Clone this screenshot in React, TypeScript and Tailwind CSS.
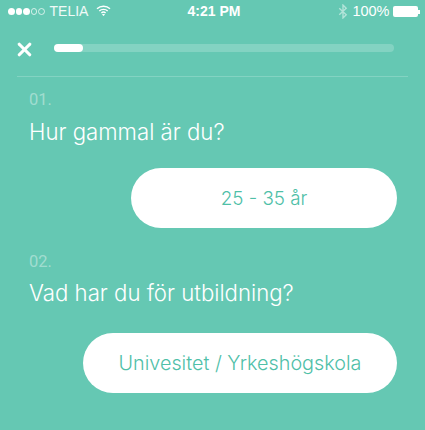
import { X } from "lucide-react";

const questions = [
  { num: "01.", text: "Hur gammal är du?", answer: "25 - 35 år", width: "w-[266px]", size: "text-[18.8px]", titleGap: "mt-[8px]", answerGap: "mt-[22px]" },
  { num: "02.", text: "Vad har du för utbildning?", answer: "Univesitet / Yrkeshögskola", width: "w-[314px]", size: "text-[19.8px]", titleGap: "mt-[7px]", answerGap: "mt-[26px]" },
];

const StatusBar = () => (
  <div className="flex h-[22px] items-center justify-between pl-2 pr-[5px] pt-[1px] font-['Liberation_Sans',sans-serif] text-[14px] text-white">
    <div className="flex w-[150px] items-center">
      <div className="flex gap-[1px]">
        {[0, 1, 2].map((i) => (
          <span key={i} className="h-[6.5px] w-[6.5px] rounded-full bg-white" />
        ))}
        {[3, 4].map((i) => (
          <span key={i} className="h-[6.5px] w-[6.5px] rounded-full border border-white/70" />
        ))}
      </div>
      <span className="ml-[5px] text-white/90">TELIA</span>
      <svg className="ml-[8px] -mt-[2px]" width="15" height="11" viewBox="0 0 15 11" fill="none" stroke="white" strokeWidth="1.4">
        <path d="M1 3.8C4.6 .4 10.4 .4 14 3.8" />
        <path d="M3.3 6C5.6 3.8 9.4 3.8 11.7 6" />
        <path d="M5.4 8C6.5 7 8.5 7 9.6 8" />
        <path d="M7.5 11L6 9.4C6.8 8.8 8.2 8.8 9 9.4Z" fill="white" stroke="none" />
      </svg>
    </div>
    <span className="font-bold">4:21 PM</span>
    <div className="flex w-[150px] items-center justify-end">
      <svg width="10" height="15" viewBox="0 0 9 14" fill="none" stroke="white" strokeOpacity="0.5" strokeWidth="1.3">
        <path d="M1 4L7.5 10L4.5 13V1L7.5 4L1 10" />
      </svg>
      <span className="ml-[4px] text-[14.5px]">100%</span>
      <div className="ml-[4px] flex items-center">
        <div className="h-[11px] w-[25px] rounded-[2px] border border-white/80 bg-white" />
        <div className="h-[4px] w-[1.5px] bg-white" />
      </div>
    </div>
  </div>
);

export default function App() {
  return (
    <div className="h-[430px] w-[425px] overflow-hidden bg-[#65c8b3] font-['Inter',sans-serif] text-white">
      <StatusBar />
      <div className="mx-[17px] flex h-[55px] items-start border-b border-white/20 pt-[18px]">
        <X className="-ml-[3px] -mt-[1px] h-[21px] w-[21px]" strokeWidth={3.6} />
        <div className="ml-[19px] mt-[4px] h-[8px] w-[340px] rounded-full bg-white/20">
          <div className="h-full w-[29px] rounded-full bg-white" />
        </div>
      </div>
      <div className="pl-[29px] pr-[28px] pt-[13px]">
        {questions.map((q) => (
          <div key={q.num} className="mb-[24px]">
            <p className="font-['Roboto',sans-serif] text-[16.5px] leading-[20px] text-white/40">{q.num}</p>
            <h2 className={`text-[22.2px] font-light leading-[28px] ${q.titleGap}`}>{q.text}</h2>
            <div className={`flex justify-end ${q.answerGap}`}>
              <button className={`h-[60px] rounded-full bg-white pt-[2px] font-light text-[#4fc0a8] ${q.size} ${q.width}`}>
                {q.answer}
              </button>
            </div>
          </div>
        ))}
      </div>
    </div>
  );
}
